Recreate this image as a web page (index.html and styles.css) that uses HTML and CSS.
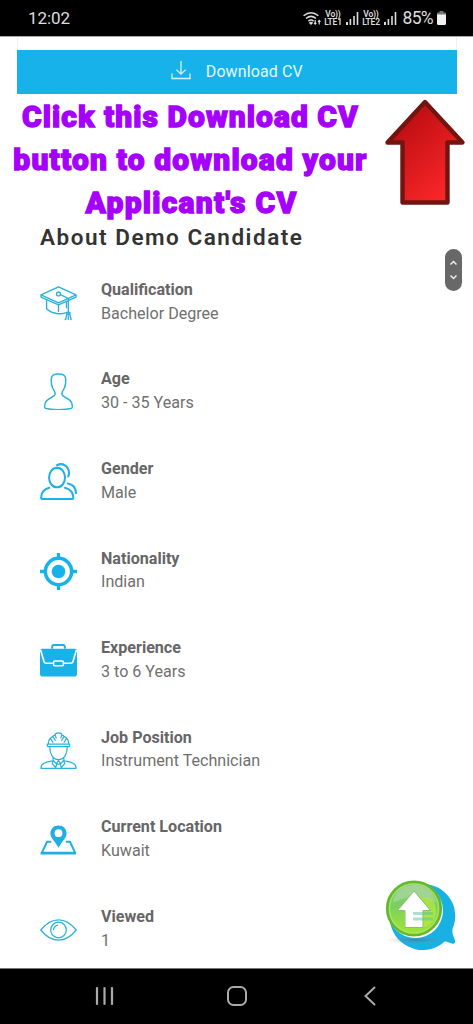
FILE: index.html
```html
<!DOCTYPE html>
<html lang="en">
<head>
<meta charset="utf-8">
<title>Demo Candidate</title>
<link rel="stylesheet" href="styles.css">
</head>
<body>
<div class="phone">
  <header class="status">
    <span class="clock">12:02</span>
    <div class="status-icons">
      <svg class="wifi" width="19" height="15" viewBox="0 0 19 15" fill="none" stroke="#ddd" stroke-width="1.5"><path d="M.6 4.8Q8 -1.4 15.4 4.8M3 7.5q5-4.2 10 0M5.4 10.1q2.6-2.1 5.2 0"/><path d="M8 14l-2.2-2.3q2.2-1.7 4.4 0z" fill="#ddd" stroke="none"/><path d="M12.2 9v4M11 11.8l1.2 1.4 1.2-1.4M16.2 13.4v-4M15 10.8l1.2-1.4 1.2 1.4" stroke-width="1.2"/></svg>
      <span class="lte"><span>Vo))</span><span>LTE1</span></span>
      <svg class="signal" width="13" height="13" viewBox="0 0 13 13" fill="#ddd"><path d="M0 10h2v3H0zM3.6 7h1.600v6h-1.600zM7.2 4h1.600v9h-1.600zM10.7 0h1.600v13h-1.600z"/></svg>
      <span class="lte"><span>Vo))</span><span>LTE2</span></span>
      <svg class="signal" width="13" height="13" viewBox="0 0 13 13" fill="#ddd"><path d="M0 10h2v3H0zM3.6 7h1.600v6h-1.600zM7.2 4h1.600v9h-1.600zM10.7 0h1.600v13h-1.600z"/></svg>
      <span class="percent">85%</span>
      <svg class="battery" width="9" height="14" viewBox="0 0 9 14"><path d="M2.5 0h4v1.5H8q1 0 1 1V4H0V2.5q0-1 1-1h1.5z" fill="#777"/><path d="M0 3.5h9v9q0 1.5-1.5 1.5h-6Q0 14 0 12.5z" fill="#f2f2f2"/></svg>
    </div>
  </header>

  <main class="page">
    <div class="card">
      <div class="download">
        <svg width="20" height="20" viewBox="0 0 20 20" fill="none" stroke="#d5f3fc" stroke-width="1.3"><path d="M10 0v13M5.3 8.6 10 13.2l4.7-4.6M1 12.5v5h18v-5"/></svg>
        <span>Download CV</span>
      </div>
    </div>
    <p class="callout"><span class="l1">Click this Download CV</span><span class="l2">button to download your</span><span class="l3">Applicant's CV</span></p>
    <h2 class="heading">About Demo Candidate</h2>

    <ul class="facts">
      <li class="fact">
        <svg class="icon" viewBox="0 0 38 38" fill="none" stroke="#2bb2dc" stroke-width="1.4" stroke-linejoin="round"><path d="M1 11.2 19 3l18 8.2-18 8.3zM1 11.2v2.2l18 8.1 18-8.1v-2.2M6.8 17v8.5c5 5.2 15.5 6.4 21 3.5M6.8 23v2.5M19 22v6.7M21 10.8l8.1 4.3V31"/><circle cx="19" cy="10.2" r="2"/><path d="M27.5 29.2h3.2v2h-3.2zM27.5 31.2 26.2 37M30.7 31.2 32 37M29.1 32v5M26 35.5v1.5M32 35.5v1.5M27.2 18v7"/></svg>
        <div class="text"><strong>Qualification</strong><span>Bachelor Degree</span></div>
      </li>
      <li class="fact">
        <svg class="icon" viewBox="0 0 38 38" fill="none" stroke="#2bb2dc" stroke-width="1.5" stroke-linejoin="round"><path d="M19 1c-4.7 0-7.500 1.500-7.500 5.600 0 4 .4 6.800 1.500 9 1.700 2.600 2.800 3.800 2.500 6.400-.3 3.600-9.800 3-10.600 10.800-.2 2-.3 3 .6 3.400 6 1.900 21 1.900 27 0 .9-.4.8-1.400.6-3.400-.8-7.800-10.300-7.200-10.600-10.800-.3-2.600.8-3.800 2.500-6.400 1.100-2.200 1.500-5 1.500-9C26.500 2.500 23.700 1 19 1z"/></svg>
        <div class="text"><strong>Age</strong><span>30 - 35 Years</span></div>
      </li>
      <li class="fact">
        <svg class="icon" viewBox="0 0 38 38" fill="none" stroke="#20b0e2" stroke-width="2.100" stroke-linecap="round" stroke-linejoin="round"><ellipse cx="17.500" cy="15" rx="8.200" ry="10"/><path d="M9.500 25.500C4 27 1.200 30.500 1.200 36q0 1 1 1h31q1 0 1-1c0-5.500-3-9-8.500-10.500M17.500 2.300C23-.8 29.500 3 29.800 10q0 2-.7 3.800M28.500 21c5 .8 8.200 4.300 8.500 10"/></svg>
        <div class="text"><strong>Gender</strong><span>Male</span></div>
      </li>
      <li class="fact">
        <svg class="icon" viewBox="0 0 38 38" fill="none" stroke="#18b2e8"><circle cx="19" cy="19" r="13.500" stroke-width="3.600"/><circle cx="19" cy="19" r="7" fill="#18b2e8" stroke="none"/><path d="M19 0v6M19 32v6M0 19h6M32 19h6" stroke-width="3.400"/></svg>
        <div class="text"><strong>Nationality</strong><span>Indian</span></div>
      </li>
      <li class="fact">
        <svg class="icon" viewBox="0 0 38 38"><path d="M2 7h34q2 0 2 2v23.500q0 3-3 3H3q-3 0-3-3V9q0-2 2-2z" fill="#18b2e8"/><path d="M12.500 7V5q0-2 2-2h9q2 0 2 2v2" fill="none" stroke="#18b2e8" stroke-width="2"/><path d="M.5 8 4.300 20.500q.5 1.300 2 1.300h7.500M37.500 8l-3.800 12.500q-.5 1.300-2 1.300h-7.500" fill="none" stroke="#fff" stroke-width="1.700"/><rect x="14" y="19.500" width="10" height="4.800" rx="1" fill="#18b2e8" stroke="#fff" stroke-width="1.600"/></svg>
        <div class="text"><strong>Experience</strong><span>3 to 6 Years</span></div>
      </li>
      <li class="fact">
        <svg class="icon" viewBox="0 0 38 38" fill="none" stroke="#2bb2dc" stroke-width="1.250" stroke-linejoin="round"><path d="M7.500 14v-1.500h23V14q0 1-1 1h-21q-1 0-1-1zM8.500 12.500c0-4 2-6.700 4.700-8L16 9M29.500 12.500c0-4-2-6.700-4.700-8L22 9M13.500 4l2-1 1.200 3.500M24.500 4l-2-1-1.200 3.500M15.500 3q0-2.200 3.500-2.200T22.500 3M11 7l2.500 4M27 7l-2.500 4M10 15c0 7.500 3 13.300 9 13.300S28 22.500 28 15M13.500 26.300v3.200C6.500 31 1 31.500 1 37.300h36c0-5.800-5.500-6.300-12.500-7.800v-3.200M13.500 29l3.200 3.500 2.300-3 2.300 3 3.200-3.500M17.500 31.500 16 37M20.500 31.500 22 37M13.500 30l-1 2.500 4 4.500M24.500 30l1 2.500-4 4.500M17 33h4"/></svg>
        <div class="text"><strong>Job Position</strong><span>Instrument Technician</span></div>
      </li>
      <li class="fact">
        <svg class="icon" viewBox="0 0 38 38"><path d="M11.500 21.300H7.200L2 32.500h34l-5.200-11.200h-4.300" fill="none" stroke="#20afe0" stroke-width="2"/><path d="M1 31.800h36v2.700H.5z" fill="#20afe0"/><path fill="#20afe0" fill-rule="evenodd" d="M19 4.500c-5 0-8.300 3.500-8.300 8 0 5.500 5.300 8.500 8.300 15 3-6.500 8.300-9.500 8.300-15 0-4.500-3.300-8-8.300-8zm0 4a4 4 0 1 1 0 8 4 4 0 0 1 0-8z"/></svg>
        <div class="text"><strong>Current Location</strong><span>Kuwait</span></div>
      </li>
      <li class="fact">
        <svg class="icon" viewBox="0 0 38 38" fill="none" stroke="#2bb2dc" stroke-width="1.300"><path d="M.8 19.500C6 13 12 9 19 9s13 4 18.200 10.500C32 26 26 30 19 30S6 26 .8 19.500z"/><circle cx="19" cy="19.500" r="8"/><path d="M14 19.500q0-4 4.500-5"/></svg>
        <div class="text"><strong>Viewed</strong><span>1</span></div>
      </li>
    </ul>
  </main>

  <nav class="nav">
    <svg class="recents" width="20" height="20" viewBox="0 0 20 20" stroke="#aaa" stroke-width="2.200" stroke-linecap="round"><path d="M2 2v16M9.500 2v16M17 2v16"/></svg>
    <svg width="22" height="22" viewBox="0 0 22 22" fill="none" stroke="#aaa" stroke-width="2"><rect x="2" y="2" width="18" height="18" rx="5.500"/></svg>
    <svg width="14" height="20" viewBox="0 0 14 20" fill="none" stroke="#aaa" stroke-width="2" stroke-linecap="round"><path d="M11.500 1.500 2.500 10l9 8.500"/></svg>
  </nav>

  <svg class="arrow" viewBox="0 0 82 108"><defs><linearGradient id="red" x1="0" y1="0" x2=".7" y2="1"><stop offset=".15" stop-color="#b90c12"/><stop offset="1" stop-color="#fb2727"/></linearGradient></defs><path d="M41 4 78.500 44.500H63.500v60h-45v-60H3.500z" fill="url(#red)" stroke="#701510" stroke-width="4.400" stroke-linejoin="round"/></svg>

  <div class="scroller">
    <svg width="17" height="42" viewBox="0 0 17 42" fill="none" stroke="#eee" stroke-width="1.500"><path d="m5.500 15.500 3-3 3 3M5.500 26.500l3 3 3-3"/></svg>
  </div>

  <svg class="chat" viewBox="0 0 78 76">
    <defs>
      <linearGradient id="green" x1="0" y1="0" x2="0" y2="1"><stop offset="0" stop-color="#8ac877"/><stop offset=".45" stop-color="#79d060"/><stop offset="1" stop-color="#a6e62e"/></linearGradient>
      <radialGradient id="shade"><stop offset="0" stop-color="#555" stop-opacity=".4"/><stop offset="1" stop-color="#999" stop-opacity="0"/></radialGradient>
    </defs>
    <path d="M39 5a32 32 0 0 1 29.500 45c-1 5 2 8 2.500 12 .5 2-1 3.200-3 2.500l-7-2.200A33 33 0 1 1 39 5z" fill="#18b1e4"/>
    <ellipse cx="32" cy="61" rx="31" ry="4" fill="url(#shade)"/>
    <circle cx="31.500" cy="31.500" r="27.500" fill="#fff"/>
    <circle cx="30" cy="29.500" r="26.800" fill="url(#green)" stroke="#65b82b" stroke-width="2.600"/>
    <circle cx="30" cy="29.500" r="24.500" fill="none" stroke="#a6e56f" stroke-width="1.200"/>
    <path d="M9 24C11 1 48 -1 52 24 39 15 21 17 9 24z" fill="#c4dfc1" opacity=".45"/>
    <path d="M32 19q20-4 20 13 0 13-14 17H20V27z" fill="#c2ee35" opacity=".6"/>
    <path d="M30 12 46.500 31.500h-7.500v17h-18v-17H13.500z" fill="#fff" stroke="#8bbd73" stroke-width="1"/>
    <path d="M29 34.500h20M29 40h20" stroke="#57c6a1" stroke-width="3" opacity=".5"/>
  </svg>
</div>
</body>
</html>
```
FILE: styles.css
```css
* { box-sizing: border-box; }
body { margin: 0; background: #fff; font-family: Roboto, "Liberation Sans", sans-serif; }
.phone { position: relative; width: 473px; height: 1024px; overflow: hidden; display: flex; flex-direction: column; background: #fff; }
svg { display: block; flex: none; }

.status { height: 36px; flex: none; background: #000; color: #ddd; display: flex; justify-content: space-between; align-items: center; padding: 0 27.500px 0 28px; }
.clock { font-size: 17px; line-height: 20px; letter-spacing: -.1px; }
.status-icons { display: flex; align-items: center; }
.wifi { margin-right: -1px; }
.lte { display: flex; flex-direction: column; align-items: center; width: 19px; font-size: 8.500px; line-height: 8px; font-weight: 600; letter-spacing: -.2px; margin-left: 3px; }
.signal { margin-left: 3px; }
.percent { font-size: 17.500px; line-height: 20px; width: 33px; margin-left: 6px; letter-spacing: -.7px; white-space: nowrap; }
.battery { margin-left: 1px; }

.page { flex: 1; min-height: 0; border-top: 1px solid #aaa; overflow: hidden; }
.card { margin: 0 16.500px 0 17px; padding-top: 12.500px; box-shadow: inset 1px 0 #f0f0f0, inset -1px 0 #f0f0f0; }
.download { height: 44px; background: #18b2ea; color: #e4f7fd; display: flex; justify-content: center; align-items: center; gap: 15px; font-size: 16px; padding: 0 0 1px; letter-spacing: .1px; }
.callout { margin: 0; padding-top: 1px; width: 381px; display: flex; flex-direction: column; align-items: center; color: #a500fb; font-weight: 900; font-size: 30px; line-height: 43.400px; white-space: nowrap; -webkit-text-stroke: 1.300px #a500fb; }
.l1 { letter-spacing: 1.050px; }
.l2 { letter-spacing: 1.150px; }
.l3 { letter-spacing: 1.250px; padding-left: 2px; }
.heading { margin: -2px 0 0; padding-left: 40px; font-size: 22.500px; line-height: 28px; font-weight: 600; letter-spacing: 1.520px; color: #333; white-space: nowrap; }

.facts { list-style: none; margin: 0; padding: 27px 0 0 40px; }
.fact { height: 89.600px; display: flex; align-items: flex-start; gap: 24px; }
.icon { width: 37px; height: 37px; margin-top: 6px; }
.text { display: flex; flex-direction: column; font-size: 16.100px; line-height: 23.800px; color: #707070; white-space: nowrap; }
.text strong { font-weight: 700; color: #666; }

.nav { height: 56px; flex: none; background: #000; border-top: 1px solid #777; display: grid; grid-template-columns: repeat(3, 133px); justify-content: center; justify-items: center; align-items: center; padding-bottom: 1px; }
.recents { margin-left: 2px; }

.arrow { position: absolute; left: 384px; top: 98px; width: 82px; height: 108px; }
.scroller { position: absolute; left: 445px; top: 249px; width: 17px; height: 42px; border-radius: 9px; background: #686868; }
.chat { position: absolute; left: 384px; top: 879px; width: 78px; height: 76px; }
```
